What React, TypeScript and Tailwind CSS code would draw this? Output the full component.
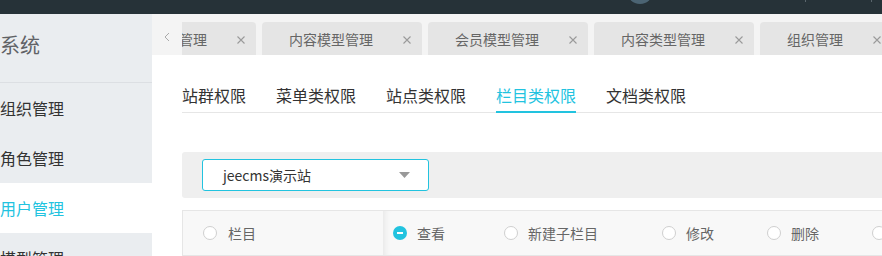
import React from "react";

const CYAN = "#22c3df";

const pageTabs = [
  { label: "站点模型管理", w: "w-[160px]" },
  { label: "内容模型管理", w: "w-[160px]" },
  { label: "会员模型管理", w: "w-[160px]" },
  { label: "内容类型管理", w: "w-[160px]" },
  { label: "组织管理", w: "w-[132px]" },
];

const permTabs = ["站群权限", "菜单类权限", "站点类权限", "栏目类权限", "文档类权限"];

const menu = ["组织管理", "角色管理", "用户管理", "模型管理"];

const actions = [
  { label: "查看", checked: true, w: "w-[111px]" },
  { label: "新建子栏目", checked: false, w: "w-[158px]" },
  { label: "修改", checked: false, w: "w-[105px]" },
  { label: "删除", checked: false, w: "w-[105px]" },
  { label: "移动", checked: false, w: "w-[105px]" },
];

const CloseIcon = () => (
  <svg width="10" height="10" viewBox="0 0 10 10" className="shrink-0">
    <path d="M1.5 1.5l7 7M8.5 1.5l-7 7" stroke="#9a9a9a" strokeWidth="1.1" />
  </svg>
);

const Radio = ({ checked }: { checked?: boolean }) =>
  checked ? (
    <span className="w-[14px] h-[14px] rounded-full bg-[#22c3df] flex items-center justify-center shrink-0">
      <span className="w-[6px] h-[2px] bg-white" />
    </span>
  ) : (
    <span className="w-[14px] h-[14px] rounded-full border border-[#cfcfcf] bg-white shrink-0" />
  );

export default function App() {
  return (
    <div
      className="w-[882px] h-[256px] overflow-hidden flex flex-col bg-white"
      style={{ fontFamily: '"Noto Sans CJK SC", "Liberation Sans", sans-serif' }}
    >
      {/* Top bar */}
      <div className="h-[14px] shrink-0 bg-[#263238] flex items-end overflow-hidden">
        <span className="ml-[627px] mb-[10px] w-[26px] h-[26px] rounded-full bg-[#4b6473] shrink-0" />
        <span className="ml-[152px] mb-[12px] w-px h-[2px] bg-[#5a666d]" />
        <span className="ml-[65px] mb-[12px] w-px h-[2px] bg-[#5a666d]" />
      </div>

      <div className="flex flex-1 min-h-0">
        {/* Sidebar */}
        <div className="w-[152px] shrink-0 bg-[#eaedf0] flex flex-col overflow-hidden">
          <div className="h-[68px] shrink-0 flex items-center pb-[6px] text-[20px] text-[#606266] leading-none">
            系统
          </div>
          <div className="h-px shrink-0 bg-[#dcdfe3]" />
          {menu.map((m) => (
            <div
              key={m}
              className={`h-[50px] shrink-0 flex items-center text-[16px] ${
                m === "用户管理" ? "bg-white text-[#22c3df]" : "text-[#333]"
              }`}
            >
              {m}
            </div>
          ))}
        </div>

        {/* Main */}
        <div className="flex-1 min-w-0 flex flex-col">
          {/* Page tabs */}
          <div className="h-[41px] shrink-0 bg-[#f4f4f4] flex">
            <div className="w-[30px] shrink-0 flex items-center justify-center pt-[4px]">
              <svg width="6" height="10" viewBox="0 0 6 10">
                <path d="M5 1L1 5l4 4" fill="none" stroke="#aaa" strokeWidth="1" />
              </svg>
            </div>
            <div className="flex-1 overflow-hidden">
              <div className="flex gap-[6px] pt-[8px] ml-[-86px]">
                {pageTabs.map((t) => (
                  <div
                    key={t.label}
                    className={`${t.w} shrink-0 h-[33px] rounded-t-[4px] bg-[#e5e5e5] flex items-center pl-[27px] pr-[10px] pt-[2px] text-[14px] text-[#666]`}
                  >
                    <span className="whitespace-nowrap">{t.label}</span>
                    <span className="ml-[29px] flex">
                      <CloseIcon />
                    </span>
                  </div>
                ))}
              </div>
            </div>
          </div>

          {/* Content */}
          <div className="flex-1 pl-[30px]">
            <div className="h-[58px] flex items-end gap-[30px] border-b border-[#e6e6e6]">
              {permTabs.map((t) => (
                <div
                  key={t}
                  className={`-mb-px pb-[5px] border-b-2 text-[16px] leading-[22px] whitespace-nowrap ${
                    t === "栏目类权限"
                      ? "border-[#22c3df] text-[#22c3df]"
                      : "border-transparent text-[#333]"
                  }`}
                >
                  {t}
                </div>
              ))}
            </div>

            <div className="mt-[39px] h-[46px] bg-[#efefef] rounded-l-[3px] flex items-center pl-[20px]">
              <div
                className="w-[227px] h-[32px] rounded-[3px] bg-white border flex items-center justify-between pl-[20px] pr-[18px]"
                style={{ borderColor: CYAN }}
              >
                <span className="text-[14px] text-[#333]">jeecms演示站</span>
                <svg width="11" height="6" viewBox="0 0 11 6">
                  <path d="M0 0h11L5.5 6z" fill="#999" />
                </svg>
              </div>
            </div>

            <div className="mt-[12px] h-[46px] border border-[#e6e6e6] border-r-0 bg-[#f8f8f8] flex">
              <div className="w-[200px] shrink-0 flex items-center pl-[20px] text-[14px] text-[#666]">
                <Radio />
                <span className="ml-[11px]">栏目</span>
              </div>
              <div className="flex-1 flex items-center pl-[10px] text-[14px] text-[#666] shadow-[inset_7px_0_6px_-5px_rgba(0,0,0,0.07)]">
                {actions.map((a) => (
                  <div key={a.label} className={`${a.w} shrink-0 flex items-center`}>
                    <Radio checked={a.checked} />
                    <span className="ml-[10px] whitespace-nowrap">{a.label}</span>
                  </div>
                ))}
              </div>
            </div>
          </div>
        </div>
      </div>
    </div>
  );
}
